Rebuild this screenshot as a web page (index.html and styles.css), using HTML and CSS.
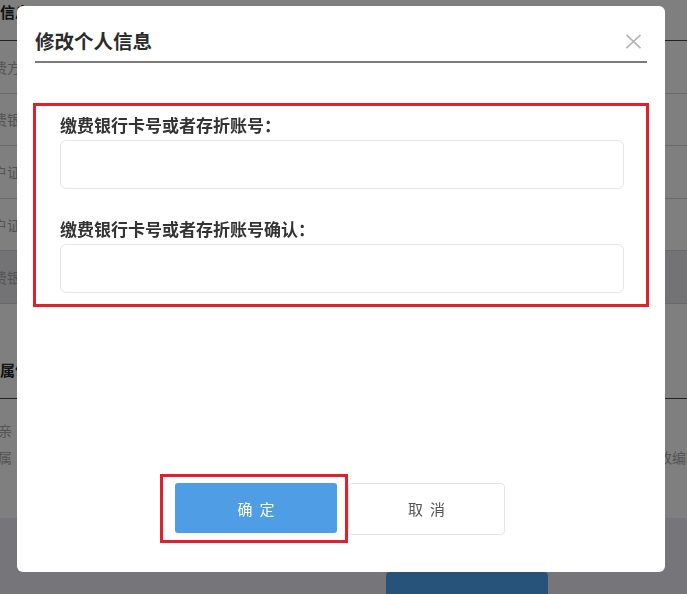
FILE: index.html
```html
<!DOCTYPE html>
<html lang="zh-CN">
<head>
<meta charset="utf-8">
<title>修改个人信息</title>
<link rel="stylesheet" href="styles.css">
</head>
<body>
<div class="page">
  <section class="card">
    <div class="card-head">基本信息</div>
    <div class="row"><span class="cell-label">缴费方式</span></div>
    <div class="row"><span class="cell-label">缴费银行</span></div>
    <div class="row"><span class="cell-label">客户证件</span></div>
    <div class="row"><span class="cell-label">客户证号</span></div>
    <div class="row row-active"><span class="cell-label">缴费银行</span></div>
    <div class="section-title">亲属信息</div>
    <div class="kin">
      <div class="kin-names"><span>母亲</span><span>家属</span></div>
      <span class="kin-action">修改编辑</span>
    </div>
  </section>
  <div class="page-foot"><button class="save-btn" type="button">保存</button></div>
</div>

<div class="mask"></div>

<div class="modal">
  <div class="modal-head">
    <h2 class="modal-title">修改个人信息</h2>
    <button class="modal-close" type="button" aria-label="关闭">
      <svg width="17" height="15" viewBox="0 0 17 15"><path d="M1.5 0.8 L15.5 14.2 M15.5 0.8 L1.5 14.2" stroke="#b4b4b4" stroke-width="1.6" fill="none"/></svg>
    </button>
  </div>
  <div class="form-box">
    <div class="field">
      <label class="field-label">缴费银行卡号或者存折账号：</label>
      <input class="field-input" type="text">
    </div>
    <div class="field">
      <label class="field-label">缴费银行卡号或者存折账号确认：</label>
      <input class="field-input" type="text">
    </div>
  </div>
  <div class="modal-foot">
    <span class="confirm-mark"><button class="btn-primary" type="button">确定</button></span>
    <button class="btn-default" type="button">取消</button>
  </div>
</div>
</body>
</html>
```

FILE: styles.css
```css
html, body {
  margin: 0;
  padding: 0;
}
body {
  width: 687px;
  height: 594px;
  overflow: hidden;
  font-family: "Noto Sans CJK SC", "Noto Sans", sans-serif;
  background: #ecebf4;
}

/* underlying page */
.page {
  margin-left: -30px;
  width: 730px;
}
.card {
  background: #ffffff;
}
.card-head {
  box-sizing: border-box;
  height: 41px;
  padding-top: 2px;
  line-height: 20px;
  font-size: 15px;
  font-weight: 700;
  color: #222;
  border-bottom: 1px solid #444;
}
.row {
  box-sizing: border-box;
  height: 52.6px;
  border-bottom: 1px solid #d2d2d2;
  display: flex;
  align-items: center;
  padding-left: 9px;
  font-size: 14px;
  color: #a8a8a8;
}
.row-active {
  background: #e6e6ea;
}
.section-title {
  box-sizing: border-box;
  height: 95px;
  padding: 56px 0 0 15px;
  line-height: 20px;
  font-size: 15px;
  font-weight: 700;
  color: #222;
  border-bottom: 1px solid #444;
}
.kin {
  box-sizing: border-box;
  height: 119px;
  display: flex;
  justify-content: space-between;
  padding: 18px 0 0 14px;
  font-size: 14px;
  line-height: 27px;
  color: #a8a8a8;
}
.kin-names {
  display: flex;
  flex-direction: column;
}
.kin-action {
  padding-top: 27px;
}
.page-foot {
  height: 120px;
  padding: 54px 0 0 416px;
  box-sizing: border-box;
}
.save-btn {
  width: 162px;
  height: 64px;
  border: 0;
  border-radius: 4px;
  background: #4ea6f4;
  color: #fff;
  font-family: inherit;
  font-size: 15px;
}

/* overlay */
.mask {
  position: fixed;
  inset: 0;
  background: rgba(0, 0, 0, 0.5);
}

/* modal */
.modal {
  position: fixed;
  left: 17px;
  top: 6px;
  width: 648px;
  height: 566px;
  background: #ffffff;
  border-radius: 6px;
  display: flex;
  flex-direction: column;
  box-sizing: border-box;
}
.modal-head {
  margin: 0 18px;
  padding: 23px 5px 8px 0;
  border-bottom: 2px solid #7a7a7a;
  display: flex;
  justify-content: space-between;
  align-items: center;
}
.modal-title {
  margin: 0;
  font-size: 19.5px;
  line-height: 24px;
  font-weight: 700;
  color: #2b2b2b;
}
.modal-close {
  padding: 0;
  border: 0;
  background: none;
  width: 17px;
  height: 15px;
  display: block;
}
.modal-close svg {
  display: block;
}
.form-box {
  margin: 40px 16px 0;
  border: 3px solid #e1202e;
  padding: 9px 22px 11px 24px;
}
.field + .field {
  margin-top: 30px;
}
.field-label {
  display: block;
  font-size: 17px;
  line-height: 20px;
  font-weight: 700;
  color: #333;
  margin-bottom: 5px;
}
.field-input {
  display: block;
  box-sizing: border-box;
  width: 100%;
  height: 49px;
  border: 1px solid #e6e6e6;
  border-radius: 6px;
  background: #fff;
  outline: none;
}
.modal-foot {
  margin-top: auto;
  padding: 0 0 29px 143px;
  display: flex;
  align-items: center;
}
.confirm-mark {
  display: block;
  border: 3px solid #e1202e;
  padding: 6px 8px 7px 12px;
}
.btn-primary {
  display: block;
  width: 162px;
  height: 50px;
  border: 0;
  border-radius: 3px;
  background: #4f9ee5;
  color: #ffffff;
  font-family: inherit;
  font-size: 15px;
  letter-spacing: 7px;
  padding: 0 0 0 7px;
}
.btn-default {
  display: block;
  width: 157px;
  height: 52px;
  border: 1px solid #e4e4e4;
  border-radius: 4px;
  background: #ffffff;
  color: #555;
  font-family: inherit;
  font-size: 15px;
  letter-spacing: 7px;
  padding: 0 0 0 7px;
}
```
